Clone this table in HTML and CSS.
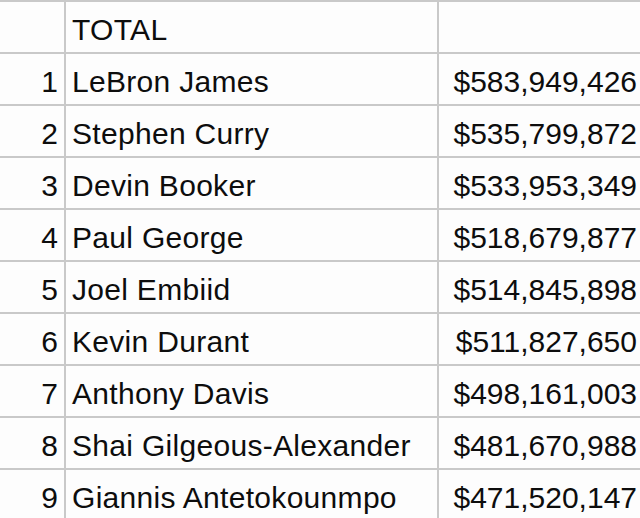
FILE: index.html
```html
<!DOCTYPE html>
<html lang="en">
<head>
<meta charset="utf-8">
<title>TOTAL</title>
<link rel="stylesheet" href="styles.css">
</head>
<body>
<div class="sheet">
  <div class="cell num"></div><div class="cell name">TOTAL</div><div class="cell val"></div>
  <div class="cell num">1</div><div class="cell name">LeBron James</div><div class="cell val">$583,949,426</div>
  <div class="cell num">2</div><div class="cell name">Stephen Curry</div><div class="cell val">$535,799,872</div>
  <div class="cell num">3</div><div class="cell name">Devin Booker</div><div class="cell val">$533,953,349</div>
  <div class="cell num">4</div><div class="cell name">Paul George</div><div class="cell val">$518,679,877</div>
  <div class="cell num">5</div><div class="cell name">Joel Embiid</div><div class="cell val">$514,845,898</div>
  <div class="cell num">6</div><div class="cell name">Kevin Durant</div><div class="cell val">$511,827,650</div>
  <div class="cell num">7</div><div class="cell name">Anthony Davis</div><div class="cell val">$498,161,003</div>
  <div class="cell num">8</div><div class="cell name">Shai Gilgeous-Alexander</div><div class="cell val">$481,670,988</div>
  <div class="cell num">9</div><div class="cell name">Giannis Antetokounmpo</div><div class="cell val">$471,520,147</div>
</div>
</body>
</html>
```

FILE: styles.css
```css
html, body {
  margin: 0;
  padding: 0;
  background: #fdfdfd;
  overflow: hidden;
}

.sheet {
  display: grid;
  grid-template-columns: 64px 371px 201px;
  grid-auto-rows: 50px;
  gap: 2px;
  padding-top: 2px;
  background: #c9c9c9;
  width: 640px;
  font-family: "Liberation Sans", Arial, sans-serif;
  font-size: 30px;
  color: #0d0d0d;
}

.cell {
  background: #fdfdfd;
  box-sizing: border-box;
  padding-top: 5px;
  line-height: 45px;
  white-space: nowrap;
  overflow: hidden;
}

.num {
  text-align: right;
  padding-right: 6px;
}

.name {
  padding-left: 6px;
  letter-spacing: 0.3px;
}

.val {
  text-align: right;
  padding-right: 3px;
}
```
